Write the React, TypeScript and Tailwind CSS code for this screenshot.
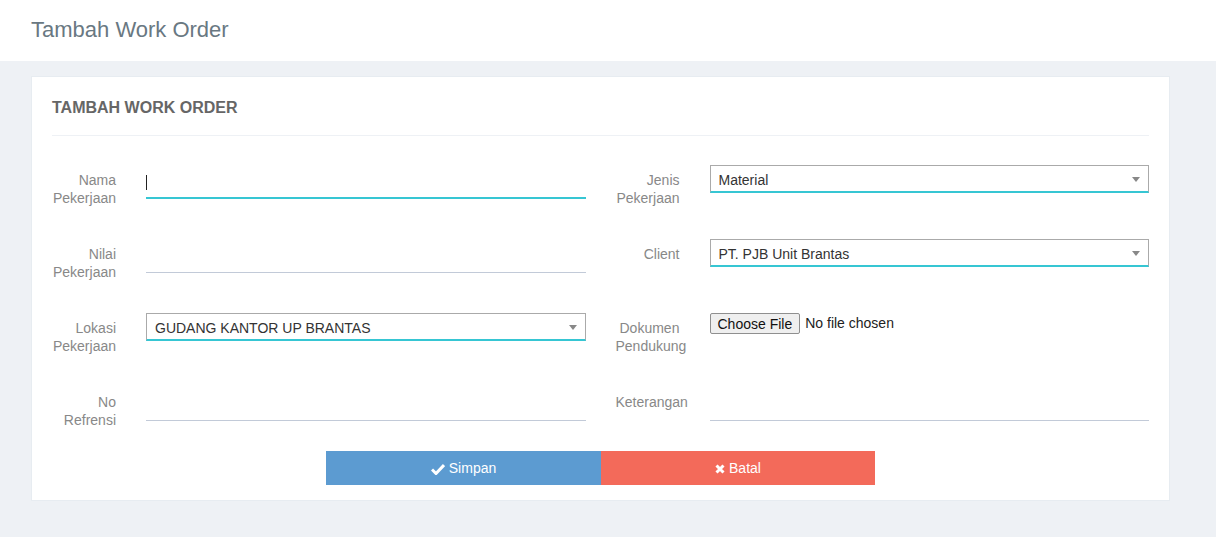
import React from "react";

const Caret = () => (
  <span className="absolute right-[8px] top-[11px] w-0 h-0 border-l-[4px] border-r-[4px] border-t-[5px] border-l-transparent border-r-transparent border-t-[#888]" />
);

function Label({ children }: { children: React.ReactNode }) {
  return (
    <div className="w-[64px] shrink-0 pt-[6px] text-right text-[14px] leading-[18px] text-[#888] whitespace-nowrap">
      {children}
    </div>
  );
}

function LineInput({ focused }: { focused?: boolean }) {
  return (
    <div
      className={
        "relative flex-1 h-[34px] " +
        (focused ? "border-b-2 border-[#36c6d3]" : "border-b border-[#c2cad8]")
      }
    >
      {focused && <span className="absolute left-0 top-[10px] w-[1px] h-[15px] bg-[#222]" />}
    </div>
  );
}

function SelectBox({ value }: { value: string }) {
  return (
    <div className="relative flex-1 h-[28px] border border-[#aaa] border-b-2 border-b-[#36c6d3] bg-white pl-[8px] pt-[1px] text-[14px] leading-[26px] text-[#333]">
      {value}
      <Caret />
    </div>
  );
}

export default function App() {
  return (
    <div className="min-h-[537px] bg-[#eef1f5]" style={{ fontFamily: '"Liberation Sans", Arial, sans-serif' }}>
      <div className="h-[61px] bg-white pl-[31px] flex items-center">
        <h1 className="text-[22px] text-[#697882] leading-none pb-[2px]">Tambah Work Order</h1>
      </div>
      <div className="pt-[15px] pl-[31px]">
        <div className="w-[1139px] bg-white border border-[#e7ecf1] px-[20px] pb-[15px]">
          <div className="h-[59px] border-b border-[#eef1f5] flex items-center pt-[3px]">
            <h2 className="text-[16px] font-bold text-[#666]">TAMBAH WORK ORDER</h2>
          </div>
          <div className="mt-[29px] grid grid-cols-2 gap-x-[30px] gap-y-[32px]">
            <div className="flex gap-[30px]">
              <Label>Nama<br />Pekerjaan</Label>
              <LineInput focused />
            </div>
            <div className="flex gap-[30px]">
              <Label>Jenis<br />Pekerjaan</Label>
              <SelectBox value="Material" />
            </div>
            <div className="flex gap-[30px]">
              <Label>Nilai<br />Pekerjaan</Label>
              <LineInput />
            </div>
            <div className="flex gap-[30px] items-start">
              <Label>Client</Label>
              <SelectBox value="PT. PJB Unit Brantas" />
            </div>
            <div className="flex gap-[30px] items-start">
              <Label>Lokasi<br />Pekerjaan</Label>
              <SelectBox value="GUDANG KANTOR UP BRANTAS" />
            </div>
            <div className="flex gap-[30px] items-start">
              <div className="w-[64px] shrink-0 pt-[6px] text-left text-[14px] leading-[18px] text-[#888] whitespace-nowrap">
                <div className="pl-[4px]">Dokumen</div>
                <div>Pendukung</div>
              </div>
              <div className="flex items-center gap-[5px] text-[14px] text-[#222]">
                <button className="h-[21px] px-[7px] border border-[#8f8f8f] rounded-[2px] bg-[#efefef] text-[14px] leading-[18px] text-[#111]">
                  Choose File
                </button>
                <span>No file chosen</span>
              </div>
            </div>
            <div className="flex gap-[30px]">
              <Label>No<br />Refrensi</Label>
              <LineInput />
            </div>
            <div className="flex gap-[30px] items-start">
              <div className="w-[64px] shrink-0 pt-[6px] text-left text-[14px] leading-[18px] text-[#888] whitespace-nowrap">
                Keterangan
              </div>
              <div className="flex-1 h-[34px] border-b border-[#c2cad8]" />
            </div>
          </div>
          <div className="mt-[22px] flex justify-center">
            <button className="w-[275px] h-[34px] bg-[#5c9bd1] text-white text-[14px] flex items-center justify-center gap-[4px]">
              <svg width="14" height="12" viewBox="0 0 14 12" className="mt-[1px]">
                <path d="M1 6.5 L5 10.5 L13 2" stroke="white" strokeWidth="3" fill="none" strokeLinejoin="miter" />
              </svg>
              Simpan
            </button>
            <button className="w-[274px] h-[34px] bg-[#f36a5a] text-white text-[14px] flex items-center justify-center gap-[4px]">
              <svg width="10" height="10" viewBox="0 0 10 10" className="mt-[1px]">
                <path d="M1.5 1.5 L8.5 8.5 M8.5 1.5 L1.5 8.5" stroke="white" strokeWidth="3" fill="none" />
              </svg>
              Batal
            </button>
          </div>
        </div>
      </div>
    </div>
  );
}
